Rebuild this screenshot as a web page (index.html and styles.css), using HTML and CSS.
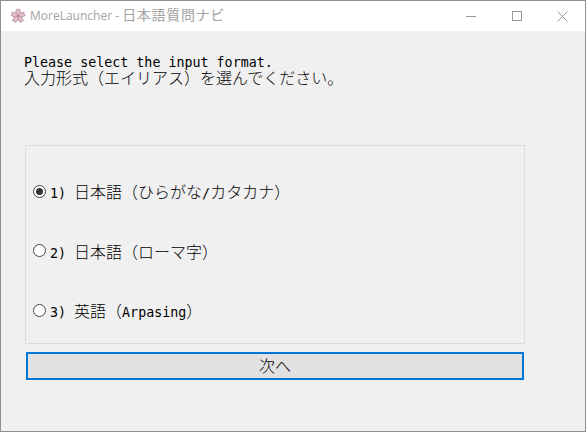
FILE: index.html
```html
<!DOCTYPE html>
<html lang="ja">
<head>
<meta charset="utf-8">
<title>MoreLauncher - 日本語質問ナビ</title>
<link rel="stylesheet" href="styles.css">
</head>
<body>
<div class="window">
  <header class="titlebar">
    <svg class="app-icon" width="16" height="16" viewBox="0 0 16 16">
      <g fill="#e6bccd" stroke="#b195a3" stroke-width="0.8">
        <path d="M8 8C5.6 6 5.4 3.2 6.6 1L8 2.2 9.6 .8C10.6 3.2 10.4 6 8 8Z"/>
        <path d="M8 8C5.6 6 5.4 3.2 6.6 1L8 2.2 9.6 .8C10.6 3.2 10.4 6 8 8Z" transform="rotate(72 8 8)"/>
        <path d="M8 8C5.6 6 5.4 3.2 6.6 1L8 2.2 9.6 .8C10.6 3.2 10.4 6 8 8Z" transform="rotate(144 8 8)"/>
        <path d="M8 8C5.6 6 5.4 3.2 6.6 1L8 2.2 9.6 .8C10.6 3.2 10.4 6 8 8Z" transform="rotate(216 8 8)"/>
        <path d="M8 8C5.6 6 5.4 3.2 6.6 1L8 2.2 9.6 .8C10.6 3.2 10.4 6 8 8Z" transform="rotate(288 8 8)"/>
      </g>
      <circle cx="8" cy="8" r="1.2" fill="#b87a94"/>
    </svg>
    <span class="title-text">MoreLauncher - <span class="title-cjk">日本語質問ナビ</span></span>
    <div class="controls">
      <span class="ctl"><svg width="10" height="10" viewBox="0 0 10 10"><path d="M0 5.5H10" stroke="#999" fill="none"/></svg></span>
      <span class="ctl"><svg width="10" height="10" viewBox="0 0 10 10"><rect x=".5" y=".5" width="9" height="9" stroke="#999" fill="none"/></svg></span>
      <span class="ctl"><svg width="11" height="11" viewBox="0 0 11 11"><path d="M.5 .5L10.5 10.5M10.5 .5L.5 10.5" stroke="#999" fill="none"/></svg></span>
    </div>
  </header>
  <main class="content">
    <div class="intro">
      <p class="line-en"><span class="lat">Please select the input format.</span></p>
      <p class="line-ja">入力形式（エイリアス）を選んでください。</p>
    </div>
    <section class="group">
      <label class="option"><span class="radio checked"></span><span class="option-text"><span class="lat">1) </span>日本語（ひらがな<span class="lat">/</span>カタカナ）</span></label>
      <label class="option"><span class="radio"></span><span class="option-text"><span class="lat">2) </span>日本語（ローマ字）</span></label>
      <label class="option"><span class="radio"></span><span class="option-text"><span class="lat">3) </span>英語（<span class="lat">Arpasing</span>）</span></label>
    </section>
    <button class="next" type="button">次へ</button>
  </main>
</div>
</body>
</html>
```
FILE: styles.css
```css
* { box-sizing: border-box; }
html, body { margin: 0; padding: 0; }
body {
  width: 586px;
  height: 432px;
  overflow: hidden;
  font-family: "Noto Sans CJK JP", "DejaVu Sans Mono", monospace;
  font-weight: 300;
  font-size: 16px;
  color: #000;
}
.window {
  width: 586px;
  height: 432px;
  border: 1px solid #948e89;
  background: #f0f0f0;
  display: flex;
  flex-direction: column;
}
.titlebar {
  height: 30px;
  background: #fff;
  display: flex;
  align-items: center;
  padding-left: 9px;
  flex: none;
}
.app-icon { flex: none; }
.title-text {
  margin-left: 4px;
  font-family: "Open Sans", "Noto Sans CJK JP", sans-serif;
  font-size: 12px;
  line-height: 16px;
  font-weight: 400;
  color: #a3a3a3;
  white-space: pre;
}
.title-cjk {
  font-size: 14px;
  line-height: 0;
  letter-spacing: .7px;
}
.controls { margin-left: auto; display: flex; }
.ctl {
  width: 45.5px;
  height: 30px;
  display: flex;
  align-items: center;
  justify-content: center;
}
.content {
  flex: 1;
  padding: 21px 0 0 23px;
  display: flex;
  flex-direction: column;
  align-items: flex-start;
}
.intro { white-space: nowrap; }
.line-en {
  margin: 0;
  height: 16px;
  line-height: 16px;
}
.line-ja {
  margin: 0;
  height: 18px;
  line-height: 18px;
}
.lat {
  font-family: "DejaVu Sans Mono", monospace;
  font-weight: 400;
  font-size: 13.33px;
  line-height: 0;
  white-space: pre;
}
.group {
  margin: 59px 0 0 1px;
  width: 500px;
  height: 199px;
  border: 1px solid #dcdcdc;
  padding: 35px 0 0 7px;
  display: flex;
  flex-direction: column;
  gap: 39.5px;
}
.option {
  height: 20px;
  display: flex;
  align-items: center;
}
.option-text {
  line-height: 20px;
  white-space: pre;
}
.radio {
  width: 13px;
  height: 13px;
  border: 1px solid #444;
  border-radius: 50%;
  background: #fff;
  margin-right: 4px;
  flex: none;
  position: relative;
}
.radio.checked::after {
  content: "";
  position: absolute;
  left: 2px;
  top: 2px;
  width: 7px;
  height: 7px;
  border-radius: 50%;
  background: #333;
}
.next {
  margin: 8px 0 0 2px;
  width: 498px;
  height: 28px;
  border: 2px solid #0078d7;
  background: #e1e1e1;
  font: inherit;
  color: #000;
  padding: 0 0 2px;
  line-height: 22px;
}
```
